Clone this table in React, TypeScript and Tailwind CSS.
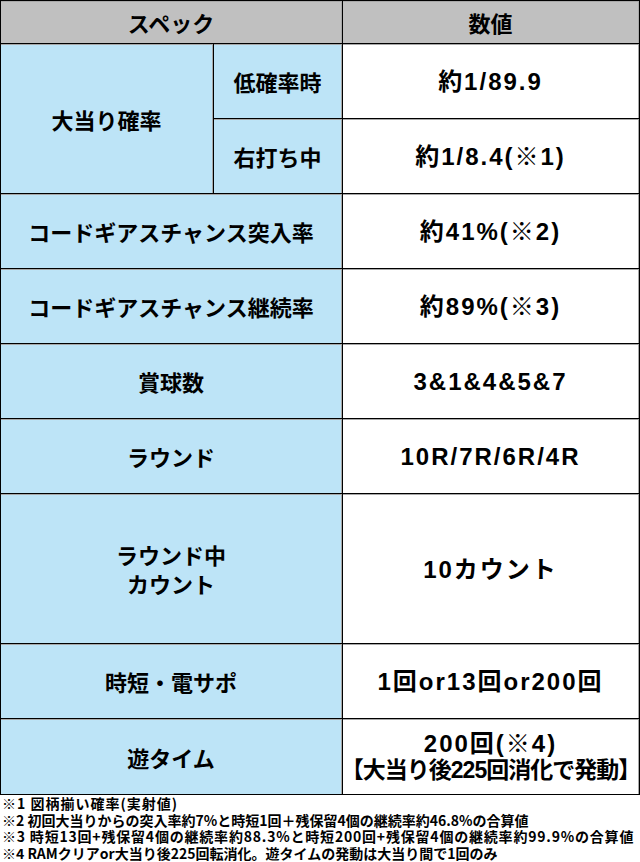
const label = "flex items-center justify-center border-t border-r border-[#a8a8a8] bg-[#bde4f7] text-center font-['Noto_Sans_CJK_JP',sans-serif] text-[22px] font-bold leading-[29px] text-black";
const value = "flex flex-col items-center justify-center border-t border-r border-[#a8a8a8] bg-white text-center font-['Liberation_Sans','Noto_Sans_CJK_JP',sans-serif] text-[24px] font-bold leading-[27px] tracking-[2px] text-black whitespace-nowrap";

const rows: [string, string][] = [
  ["コードギアスチャンス突入率", "約41%(※2)"],
  ["コードギアスチャンス継続率", "約89%(※3)"],
  ["賞球数", "3&1&4&5&7"],
  ["ラウンド", "10R/7R/6R/4R"],
];

export default function App() {
  return (
    <div className="w-[640px] bg-white">
      <div className="grid grid-cols-[212px_128px_296px] grid-rows-[42px_74px_74px_74px_74px_74px_74px_149px_74px_75px] gap-[1px] bg-black p-[1px]">
        <div className="col-span-2 flex items-center justify-center border-t border-r border-[#a8a8a8] bg-[#c0c0c0] font-['Noto_Sans_CJK_JP',sans-serif] text-[22px] font-bold text-black">
          スペック
        </div>
        <div className="flex items-center justify-center border-t border-r border-[#a8a8a8] bg-[#c0c0c0] font-['Noto_Sans_CJK_JP',sans-serif] text-[22px] font-bold text-black">
          数値
        </div>

        <div className={`${label} row-span-2`}>大当り確率</div>
        <div className={label}>低確率時</div>
        <div className={value}>約1/89.9</div>
        <div className={label}>右打ち中</div>
        <div className={value}>約1/8.4(※1)</div>

        {rows.map(([k, v]) => (
          <div key={k} className="contents">
            <div className={`${label} col-span-2`}>{k}</div>
            <div className={value}>{v}</div>
          </div>
        ))}

        <div className={`${label} col-span-2`}>
          ラウンド中
          <br />
          カウント
        </div>
        <div className={value}>10カウント</div>

        <div className={`${label} col-span-2`}>時短・電サポ</div>
        <div className={value}>1回or13回or200回</div>

        <div className={`${label} col-span-2`}>遊タイム</div>
        <div className={value}>
          <span>200回(※4)</span>
          <span className="text-[23px] tracking-[-1px]">【大当り後225回消化で発動】</span>
        </div>
      </div>

      <div className="px-[2px] font-['Noto_Sans_CJK_JP',sans-serif] text-[14px] font-bold leading-[16.5px] text-black whitespace-nowrap">
        <p className="tracking-[1px]">※1 図柄揃い確率(実射値)</p>
        <p>※2 初回大当りからの突入率約7%と時短1回＋残保留4個の継続率約46.8%の合算値</p>
        <p className="tracking-[0.8px]">※3 時短13回+残保留4個の継続率約88.3%と時短200回+残保留4個の継続率約99.9%の合算値</p>
        <p>※4 RAMクリアor大当り後225回転消化。遊タイムの発動は大当り間で1回のみ</p>
      </div>
    </div>
  );
}
